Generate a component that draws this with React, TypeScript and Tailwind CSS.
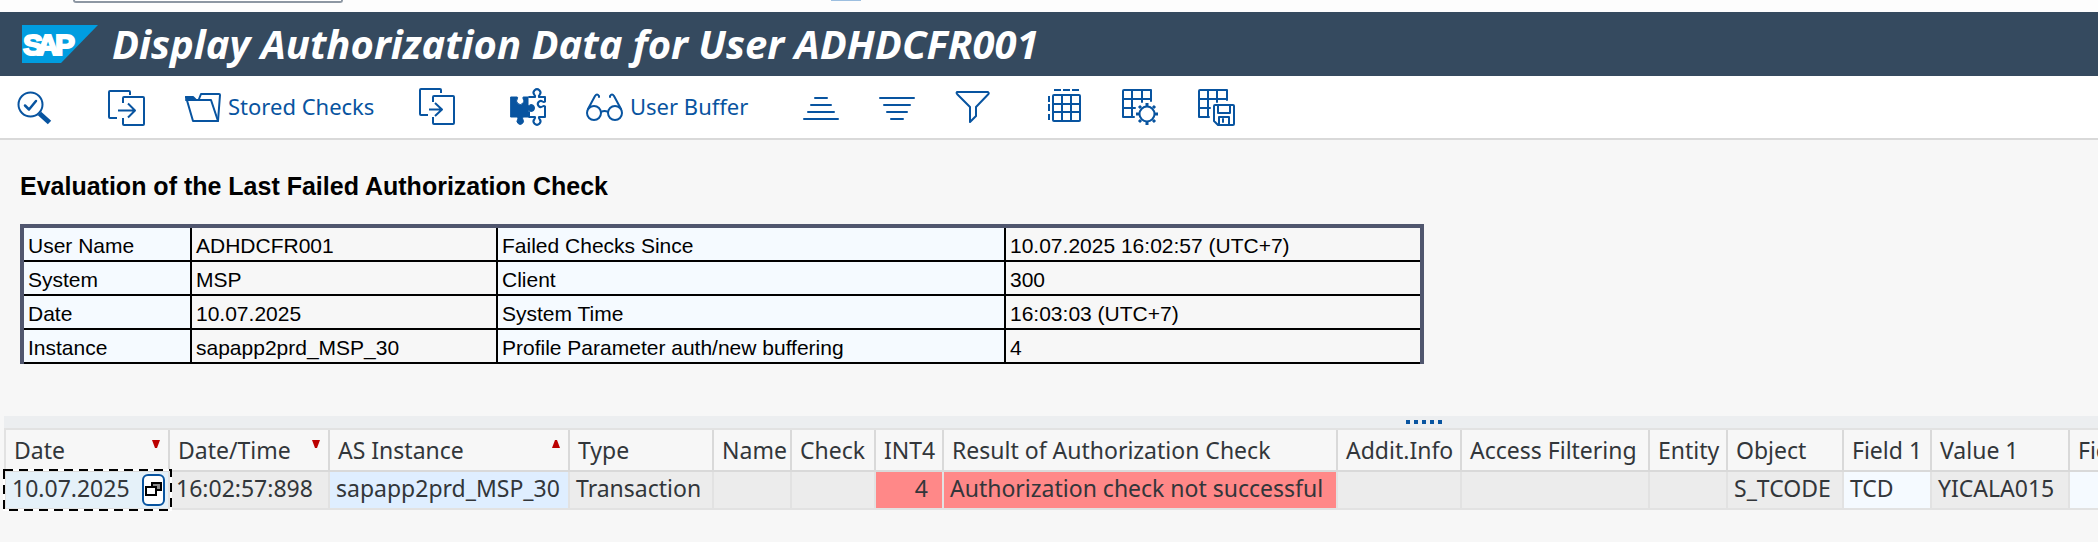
import type { ReactNode } from "react";

type Sort = "asc" | "desc";

type Column = {
  title: string;
  width: string;
  value: string;
  cell: string;
  sort?: Sort;
};

const evaluation = [
  ["User Name", "ADHDCFR001", "Failed Checks Since", "10.07.2025 16:02:57 (UTC+7)"],
  ["System", "MSP", "Client", "300"],
  ["Date", "10.07.2025", "System Time", "16:03:03 (UTC+7)"],
  ["Instance", "sapapp2prd_MSP_30", "Profile Parameter auth/new buffering", "4"],
];

const columns: Column[] = [
  { title: "Date", width: "w-[164px]", value: "10.07.2025", cell: "bg-[#e5f1f9] px-[6px]", sort: "desc" },
  { title: "Date/Time", width: "w-[160px]", value: "16:02:57:898", cell: "bg-[#ececec] px-[6px]", sort: "desc" },
  { title: "AS Instance", width: "w-[240px]", value: "sapapp2prd_MSP_30", cell: "bg-[#dfeeff] px-[6px]", sort: "asc" },
  { title: "Type", width: "w-[144px]", value: "Transaction", cell: "bg-[#ececec] px-[6px]" },
  { title: "Name", width: "w-[78px]", value: "", cell: "bg-[#ececec]" },
  { title: "Check", width: "w-[84px]", value: "", cell: "bg-[#ececec]" },
  { title: "INT4", width: "w-[68px]", value: "4", cell: "bg-[#ff8888] pr-[14px] text-right" },
  { title: "Result of Authorization Check", width: "w-[394px]", value: "Authorization check not successful", cell: "bg-[#ff8888] px-[6px]" },
  { title: "Addit.Info", width: "w-[124px]", value: "", cell: "bg-[#ececec]" },
  { title: "Access Filtering", width: "w-[188px]", value: "", cell: "bg-[#ececec]" },
  { title: "Entity", width: "w-[78px]", value: "", cell: "bg-[#ececec]" },
  { title: "Object", width: "w-[116px]", value: "S_TCODE", cell: "bg-[#ececec] px-[6px]" },
  { title: "Field 1", width: "w-[88px]", value: "TCD", cell: "bg-[#f5faff] px-[6px]" },
  { title: "Value 1", width: "w-[138px]", value: "YICALA015", cell: "bg-[#ececec] px-[6px]" },
  { title: "Field 2", width: "w-[88px]", value: "", cell: "bg-[#f5faff]" },
];

function Icon({ children }: { children: ReactNode }) {
  return (
    <svg
      viewBox="0 0 36 36"
      className="h-9 w-9 shrink-0 overflow-visible fill-none stroke-[#0854a0] stroke-2"
      strokeLinecap="round"
      strokeLinejoin="round"
      aria-hidden="true"
    >
      {children}
    </svg>
  );
}

function ToolButton({ label, children }: { label: string; children: ReactNode }) {
  return (
    <button type="button" aria-label={label} className="shrink-0">
      <Icon>{children}</Icon>
    </button>
  );
}

function SapLogo() {
  return (
    <svg viewBox="0 0 76 38" className="h-[38px] w-[76px] shrink-0" role="img" aria-label="SAP">
      <path d="M0 0h76L39 38H0z" fill="#009de0" />
      <text
        x="1 15 33"
        y="30"
        fill="#fff"
        stroke="#fff"
        strokeWidth="2"
        fontSize="30"
        fontWeight="700"
        fontFamily="Liberation Sans, sans-serif"
      >
        SAP
      </text>
    </svg>
  );
}

function SortMark({ sort }: { sort: Sort }) {
  return (
    <svg viewBox="0 0 8 8" className="absolute top-[10px] right-2 h-2 w-2 fill-[#bb0000]" aria-hidden="true">
      {sort === "desc" ? <path d="M0 0h8L5 8H3z" /> : <path d="M3 0h2l3 8H0z" />}
    </svg>
  );
}

function Toolbar() {
  return (
    <div className="flex h-16 items-center gap-14 border-b-2 border-[#d9d9d9] bg-white px-4 pb-[2px] text-[22px] text-[#0854a0]">
      <ToolButton label="Check details">
        <circle cx="14.5" cy="16.5" r="12" />
        <path d="M9 17.500l4 4 7-8.500" strokeWidth="2.5" />
        <path d="M23.500 25.500l10 9" strokeWidth="5" strokeLinecap="butt" />
      </ToolButton>

      <div className="flex items-center gap-10">
        <ToolButton label="Other user">
          <path d="M22 7V4q0-1-1-1H2Q1 3 1 4v25q0 1 1 1h7M15 15v-5q0-1 1-1h19q1 0 1 1v26q0 1-1 1H16q-1 0-1-1v-6" strokeLinecap="butt" />
          <path d="M10 22.500h17M20 15.500l7 7-7 7" strokeLinecap="butt" />
        </ToolButton>
        <button type="button" className="flex w-[194px] items-center gap-2 whitespace-nowrap">
          <Icon>
            <path d="M2 9l7 24h25L27 12H2" />
            <path d="M15 11l2-5h18q1 0 1 1l-2 26" />
            <path d="M2 9h7l3 3H3z" fill="#0854a0" />
          </Icon>
          Stored Checks
        </button>
        <ToolButton label="Load checks">
          <path d="M23 5V2q0-1-1-1H3Q2 1 2 2v24q0 1 1 1h7M15 14V9q0-1 1-1h19q1 0 1 1v26q0 1-1 1H16q-1 0-1-1v-6" strokeLinecap="butt" />
          <path d="M11 21.500h13M17 15l7 6.500-7 6.500" strokeLinecap="butt" />
        </ToolButton>
      </div>

      <div className="flex items-center gap-10">
        <ToolButton label="Authorization objects">
          <path
            d="M1 9h6q1 0 .5 1.500a3.600 3.600 0 1 0 5.500 0q-.5-1.500.5-1.500H18v9q2-1 3-1.500a3.500 3.500 0 1 1 0 7q-1-.5-3-1.500v7h-5q-1 1 0 2.500a3.200 3.200 0 1 1-5.500 0q1-1.500 0-2.500H1z"
            fill="#0854a0"
            strokeWidth="1"
          />
          <path
            d="M19 9h6q.5-1-.5-2a3.400 3.400 0 1 1 5 0q-1 1-.5 2h6v4.500q-1 1-2.500 0a3 3 0 1 0 0 5q1.500-1 2.500 0V29h-6q-.5 1 .5 2a3.400 3.400 0 1 1-5 0q1-1 .5-2h-6v-5"
            strokeWidth="2"
          />
        </ToolButton>
        <button type="button" className="flex w-[161px] items-center gap-2 whitespace-nowrap">
          <Icon>
            <circle cx="8" cy="25" r="7" />
            <circle cx="29" cy="25" r="7" />
            <path d="M15 24q3.500-2 7 0M2 21L9 8q2-3 4 0v1M35 21L28 8q-2-3-4 0v1" />
          </Icon>
          User Buffer
        </button>
      </div>

      <div className="flex items-center gap-10">
        <ToolButton label="Sort in ascending order">
          <path d="M12 10h12M8 17h20M5 24h26M1 31h34" />
        </ToolButton>
        <ToolButton label="Sort in descending order">
          <path d="M1 10h34M5 17h26M8 24h20M12 31h12" />
        </ToolButton>
        <ToolButton label="Set filter">
          <path d="M2 4h31q1.500 1 0 2.500L21 19v9l-6 6V19L2.500 6.500Q1 5 2 4z" />
        </ToolButton>
      </div>

      <div className="flex items-center gap-10">
        <ToolButton label="Choose layout">
          <rect x="6" y="7" width="27" height="26" rx="1" />
          <path d="M15 7v26M24 7v26M6 16h27M6 24h27" />
          <path d="M7 2h7M16 2h7M25 2h7M2 8v6M2 16v7M2 26v6" strokeLinecap="butt" />
        </ToolButton>
        <ToolButton label="Change layout">
          <path d="M11 29H0V3q0-1 1-1h27v11M9 2v27M19 2v12M0 11h28M0 20h12" />
          <circle cx="24" cy="26" r="7.500" />
          <path
            d="M24 18v-3M24 37v-3M16 26h-3M35 26h-3M18 20l-2-2M30 20l2-2M18 32l-2 2M30 32l2 2"
            strokeWidth="3"
            strokeLinecap="butt"
          />
        </ToolButton>
        <ToolButton label="Save layout">
          <path d="M10 29H0V3q0-1 1-1h27v10M9 2v27M18 2v12M0 11h28M0 20h11" />
          <path d="M16 17h18q1 0 1 1v18q0 1-1 1H19l-4-4V18q0-1 1-1zM19 17v8h12v-8M20 36v-7h10v7" />
          <path d="M24 31v3" />
        </ToolButton>
      </div>
    </div>
  );
}

function EvaluationTable() {
  return (
    <table className="mt-[22px] w-[1404px] table-fixed border-separate border-spacing-0 border-x-4 border-t-4 border-[#50566e] text-left font-['Liberation_Sans',sans-serif] text-[21px] leading-7 text-black">
      <colgroup>
        <col className="w-[168px]" />
        <col className="w-[306px]" />
        <col className="w-[508px]" />
        <col />
      </colgroup>
      <tbody>
        {evaluation.map(([label, value, label2, value2]) => (
          <tr key={label}>
            <th scope="row" className="border-r-2 border-b-2 border-black bg-[#f5faff] pt-1 pl-1 font-normal">
              {label}
            </th>
            <td className="border-r-2 border-b-2 border-black pt-1 pl-1">{value}</td>
            <th scope="row" className="border-r-2 border-b-2 border-black bg-[#f5faff] pt-1 pl-1 font-normal">
              {label2}
            </th>
            <td className="border-b-2 border-black pt-1 pl-1">{value2}</td>
          </tr>
        ))}
      </tbody>
    </table>
  );
}

// Focused cell: dashed frame plus the value help button
function CellFocus() {
  return (
    <>
      <svg className="pointer-events-none absolute -top-1 -left-1 z-10 h-11 w-[170px] fill-none stroke-2" aria-hidden="true">
        <rect x="2" y="2" width="167" height="40" className="stroke-white" />
        <rect x="2" y="2" width="167" height="40" className="stroke-black" strokeDasharray="9 6" />
      </svg>
      <button
        type="button"
        aria-label="Value help"
        className="absolute top-[2px] right-[3px] flex h-8 w-[23px] items-center justify-center rounded-md border-2 border-[#0854a0] bg-white"
      >
        <svg viewBox="0 0 17 16" className="h-4 w-[17px] shrink-0 stroke-black stroke-2" aria-hidden="true">
          <path d="M7 1h9v7H7z" fill="#888" />
          <path d="M1 5h10v8H1z" fill="#fff" />
        </svg>
      </button>
    </>
  );
}

function ResultGrid() {
  return (
    <table className="w-[2152px] table-fixed border-separate border-spacing-0 border-l-2 border-[#e2e2e2] text-left text-[23px] leading-[30px] whitespace-nowrap text-[#32363a]">
      <thead>
        <tr>
          {columns.map((col) => (
            <th
              key={col.title}
              scope="col"
              className={`${col.width} relative h-[42px] border-r-2 border-b-2 border-[#d9d9d9] pl-2 font-normal`}
            >
              {col.title}
              {col.sort && <SortMark sort={col.sort} />}
            </th>
          ))}
        </tr>
      </thead>
      <tbody>
        <tr>
          {columns.map((col, i) => (
            <td
              key={col.title}
              className={`${col.cell} ${i === 0 ? "relative" : ""} h-[38px] border-r-2 border-b-2 border-[#e2e2e2] pb-1`}
            >
              {col.value}
              {i === 0 && <CellFocus />}
            </td>
          ))}
        </tr>
      </tbody>
    </table>
  );
}

export default function App() {
  return (
    <div className="min-h-screen overflow-hidden bg-[#f7f7f7] font-['Noto_Sans',sans-serif]">
      <div className="flex h-3 items-start bg-[#fdfdfd] pl-[73px]">
        <input
          type="text"
          aria-label="Command"
          className="h-[3px] w-[270px] rounded-b border-x-2 border-b-2 border-[#8d97a3] bg-white"
        />
        <span className="ml-[488px] h-px w-[30px] bg-[#9dbfe0]" />
      </div>

      <header className="flex h-16 items-center gap-[14px] bg-[#354a5f] px-[22px]">
        <SapLogo />
        <h1 className="text-[40px] leading-[48px] font-bold whitespace-nowrap text-white italic">
          Display Authorization Data for User ADHDCFR001
        </h1>
      </header>

      <Toolbar />

      <main>
        <section className="px-5 pt-[30px]">
          <h2 className="font-['Liberation_Sans',sans-serif] text-[25px] leading-8 font-bold text-black">
            Evaluation of the Last Failed Authorization Check
          </h2>
          <EvaluationTable />
        </section>

        <section className="mt-[52px] ml-1">
          <div className="flex h-[14px] items-center gap-1 border-b-2 border-[#e2e2e2] bg-[#eceef0] pl-[1402px]">
            {[0, 1, 2, 3, 4].map((dot) => (
              <span key={dot} className="h-1 w-1 bg-[#0854a0]" />
            ))}
          </div>
          <ResultGrid />
        </section>
      </main>
    </div>
  );
}
